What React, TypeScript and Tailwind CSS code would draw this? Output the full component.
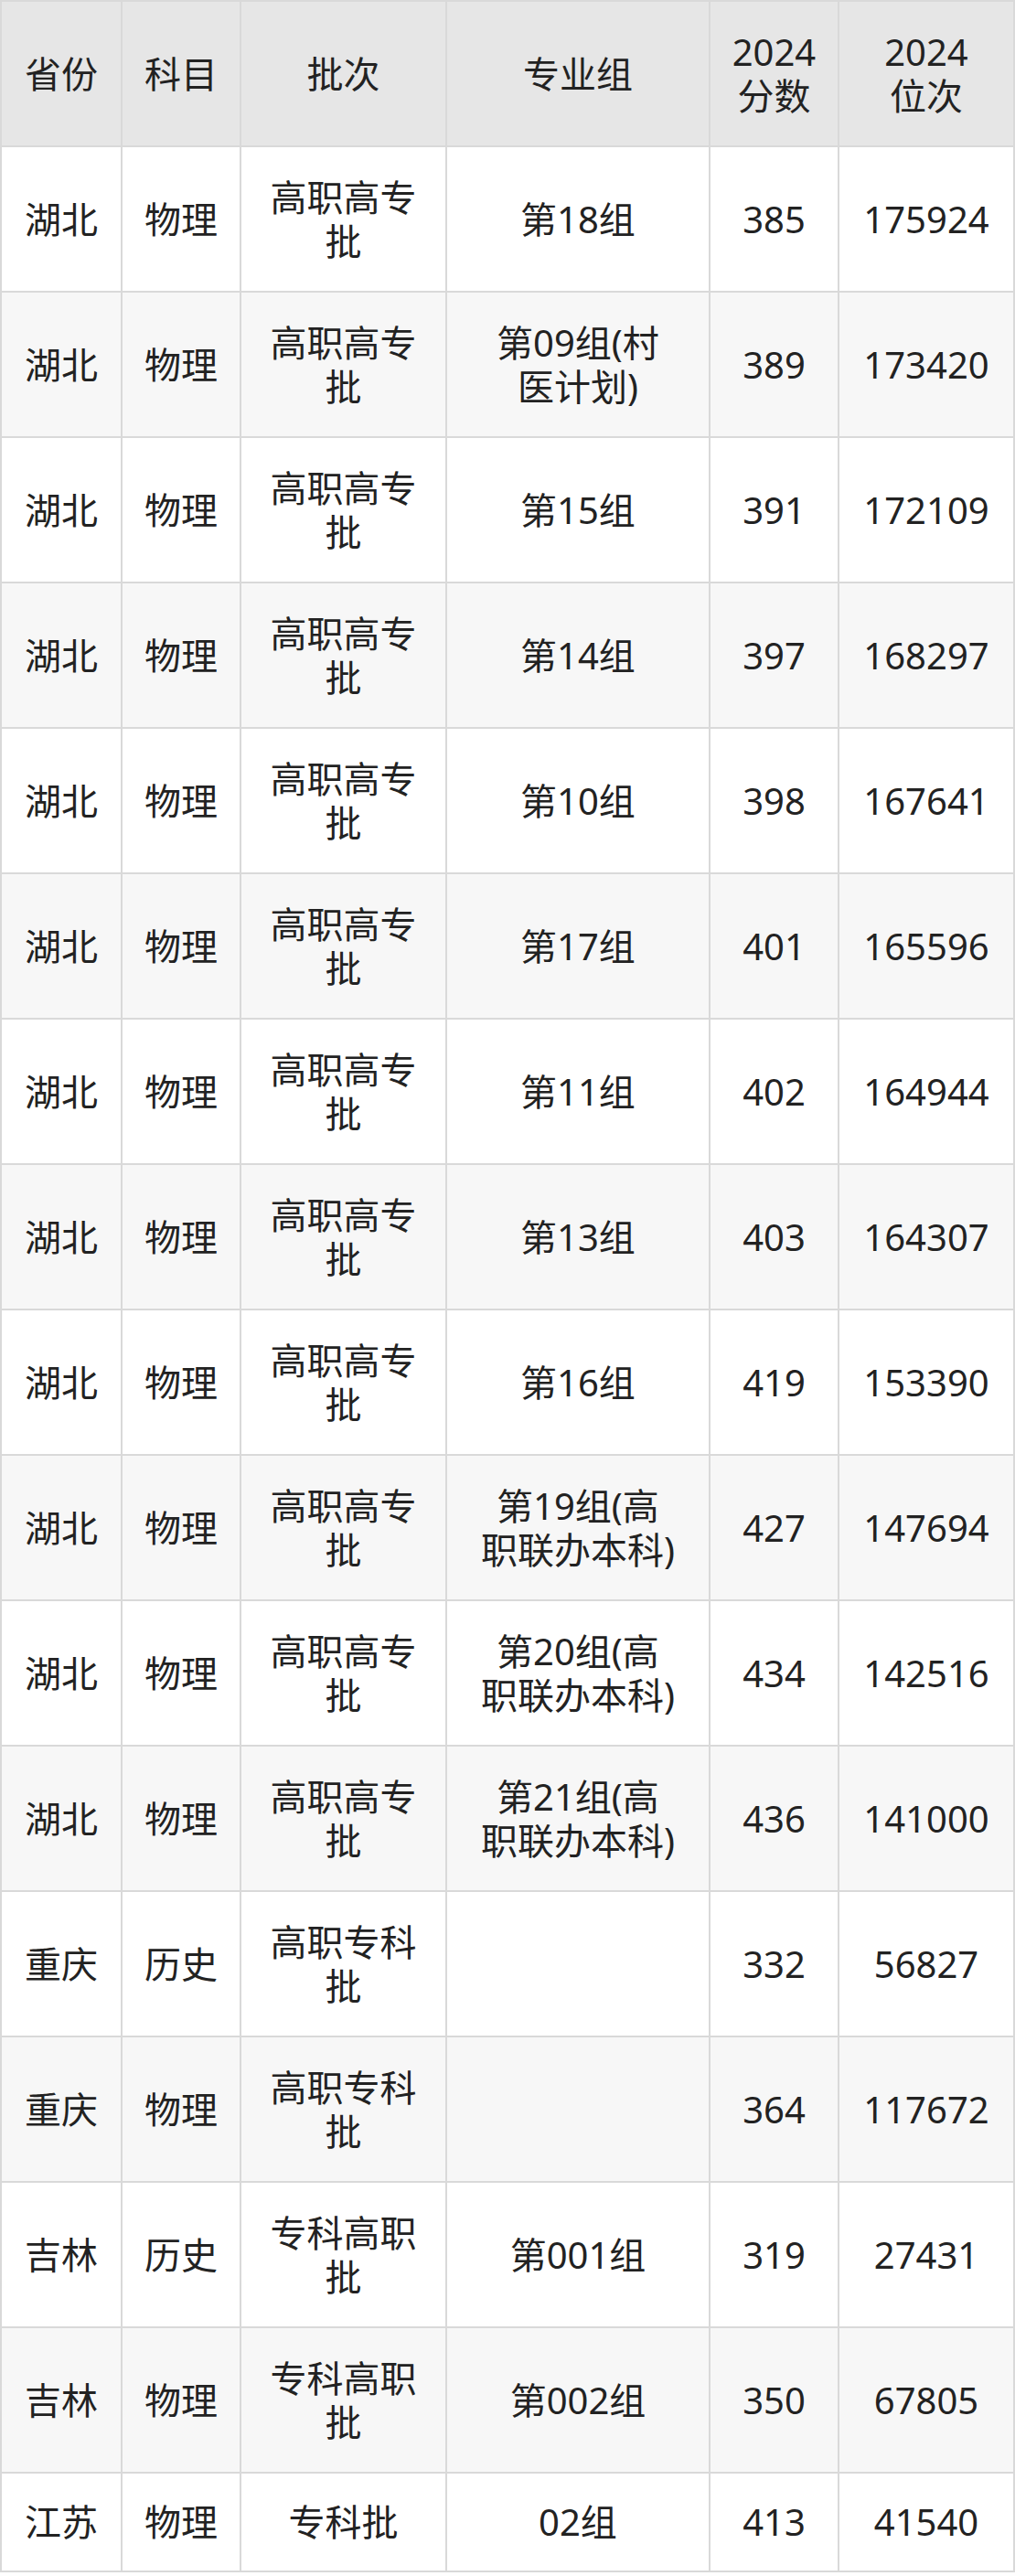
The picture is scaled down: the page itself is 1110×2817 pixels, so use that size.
import React from "react";

type Row = {
  p: string;
  s: string;
  b: string[];
  g: string[];
  score: string;
  rank: string;
};

const GZ = ["高职高专", "批"];
const LB = ["职联办本科)"];

const rows: Row[] = [
  { p: "湖北", s: "物理", b: GZ, g: ["第18组"], score: "385", rank: "175924" },
  { p: "湖北", s: "物理", b: GZ, g: ["第09组(村", "医计划)"], score: "389", rank: "173420" },
  { p: "湖北", s: "物理", b: GZ, g: ["第15组"], score: "391", rank: "172109" },
  { p: "湖北", s: "物理", b: GZ, g: ["第14组"], score: "397", rank: "168297" },
  { p: "湖北", s: "物理", b: GZ, g: ["第10组"], score: "398", rank: "167641" },
  { p: "湖北", s: "物理", b: GZ, g: ["第17组"], score: "401", rank: "165596" },
  { p: "湖北", s: "物理", b: GZ, g: ["第11组"], score: "402", rank: "164944" },
  { p: "湖北", s: "物理", b: GZ, g: ["第13组"], score: "403", rank: "164307" },
  { p: "湖北", s: "物理", b: GZ, g: ["第16组"], score: "419", rank: "153390" },
  { p: "湖北", s: "物理", b: GZ, g: ["第19组(高", ...LB], score: "427", rank: "147694" },
  { p: "湖北", s: "物理", b: GZ, g: ["第20组(高", ...LB], score: "434", rank: "142516" },
  { p: "湖北", s: "物理", b: GZ, g: ["第21组(高", ...LB], score: "436", rank: "141000" },
  { p: "重庆", s: "历史", b: ["高职专科", "批"], g: [], score: "332", rank: "56827" },
  { p: "重庆", s: "物理", b: ["高职专科", "批"], g: [], score: "364", rank: "117672" },
  { p: "吉林", s: "历史", b: ["专科高职", "批"], g: ["第001组"], score: "319", rank: "27431" },
  { p: "吉林", s: "物理", b: ["专科高职", "批"], g: ["第002组"], score: "350", rank: "67805" },
  { p: "江苏", s: "物理", b: ["专科批"], g: ["02组"], score: "413", rank: "41540" },
];

function Cell({ lines, bg, tall }: { lines: string[]; bg: string; tall: boolean }) {
  return (
    <div
      className={
        "flex items-center justify-center text-center whitespace-nowrap " +
        (tall ? "h-[157px] " : "h-[106px] ") +
        bg
      }
    >
      {lines.length > 0 && (
        <p>
          {lines.map((l, i) => (
            <React.Fragment key={i}>
              {i > 0 && <br />}
              {l}
            </React.Fragment>
          ))}
        </p>
      )}
    </div>
  );
}

export default function App() {
  const header: string[][] = [["省份"], ["科目"], ["批次"], ["专业组"], ["2024", "分数"], ["2024", "位次"]];
  return (
    <div className="w-[1110px] bg-white font-['Noto_Sans','Noto_Sans_CJK_SC',sans-serif] text-[40px] leading-[48px] text-[#222222]">
      <div className="grid w-[1110px] grid-cols-[130px_128px_223px_286px_139px_190px] gap-[2px] bg-[#d9d9d9] p-[2px]">
        {header.map((h, i) => (
          <Cell key={"h" + i} lines={h} bg="bg-[#e6e6e6]" tall={true} />
        ))}
        {rows.map((r, ri) => {
          const bg = ri % 2 === 0 ? "bg-white" : "bg-[#f7f7f7]";
          const tall = r.b.length > 1 || r.g.length > 1;
          const cells = [[r.p], [r.s], r.b, r.g, [r.score], [r.rank]];
          return cells.map((c, ci) => (
            <Cell key={ri + "-" + ci} lines={c} bg={bg} tall={tall} />
          ));
        })}
      </div>
    </div>
  );
}
